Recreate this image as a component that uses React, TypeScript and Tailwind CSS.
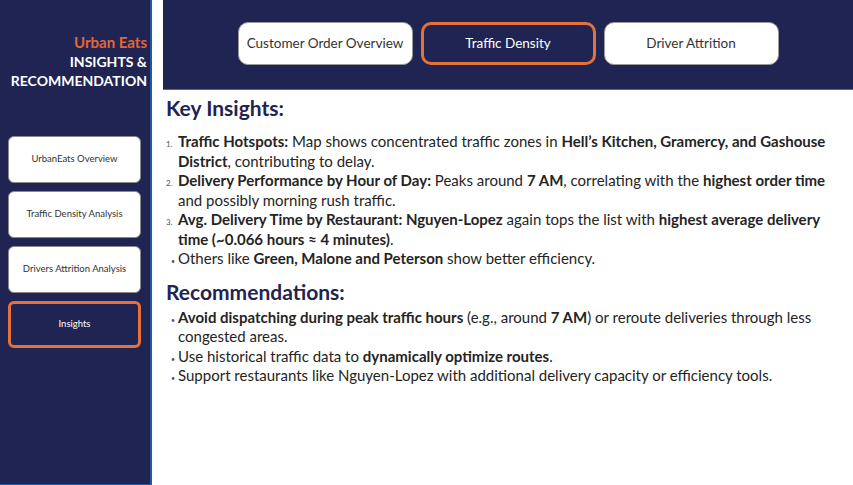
const navy = "bg-[#1f2452]";

const sideButtons = [
  { label: "UrbanEats Overview", active: false },
  { label: "Traffic Density Analysis", active: false },
  { label: "Drivers Attrition Analysis", active: false },
  { label: "Insights", active: true },
];

const topButtons = [
  { label: "Customer Order Overview", active: false },
  { label: "Traffic Density", active: true },
  { label: "Driver Attrition", active: false },
];

function Num({ n }: { n: string }) {
  return (
    <span className="inline-block w-[12px] text-[8px] leading-none text-[#555]">
      {n}
    </span>
  );
}

function Dot() {
  return (
    <span className="inline-block w-[12px] pl-[5px] text-[7px] leading-none text-[#555]">
      •
    </span>
  );
}

export default function App() {
  return (
    <div
      className="flex h-[485px] w-[853px] overflow-hidden bg-white"
      style={{ fontFamily: "Lato, 'Open Sans', sans-serif" }}
    >
      {/* sidebar */}
      <aside className={`${navy} flex w-[152px] shrink-0 flex-col border-r-2 border-b border-[#1b5aa6]`}>
        <div className="mt-[33px] pr-[3px] text-right text-[14px] font-bold leading-[19px]">
          <div className="text-[15px] text-[#e4663a]">Urban Eats</div>
          <div className="text-white">INSIGHTS &amp;</div>
          <div className="text-white">RECOMMENDATION</div>
        </div>
        <nav className="mt-[46px] ml-[8px] flex w-[133px] flex-col gap-[8px]">
          {sideButtons.map((b) =>
            b.active ? (
              <div
                key={b.label}
                className="flex h-[47px] items-center justify-center rounded-[6px] border-[3px] border-[#e4703a] text-[9.5px] text-white"
              >
                {b.label}
              </div>
            ) : (
              <div
                key={b.label}
                className="flex h-[47px] items-center justify-center rounded-[6px] border border-[#8a8a8a] bg-white text-[9.5px] text-[#333]"
              >
                {b.label}
              </div>
            )
          )}
        </nav>
      </aside>

      {/* main */}
      <main className="flex flex-1 flex-col">
        <header className={`${navy} ml-[11px] flex h-[90px] items-center justify-center gap-[8px] border-b border-[#3d6fb0] pb-[3px]`}>
          {topButtons.map((b) =>
            b.active ? (
              <div
                key={b.label}
                className="flex h-[43px] w-[175px] items-center justify-center rounded-[10px] border-[3px] border-[#e4703a] text-[13.5px] text-white"
              >
                {b.label}
              </div>
            ) : (
              <div
                key={b.label}
                className="flex h-[43px] w-[175px] items-center justify-center rounded-[10px] border border-[#9a9a9a] bg-white text-[13.5px] text-[#333]"
              >
                {b.label}
              </div>
            )
          )}
        </header>

        <section className="pl-[14px] text-[15px] leading-[19.5px] text-[#252423]">
          <h1 className="mt-[4px] text-[21px] font-bold leading-[28px] text-[#1f2452]">
            Key Insights:
          </h1>
          <div className="mt-[10px] whitespace-nowrap">
            <div>
              <Num n="1." />
              <b>Traffic Hotspots:</b> Map shows concentrated traffic zones in{" "}
              <b>Hell’s Kitchen, Gramercy, and Gashouse</b>
            </div>
            <div className="pl-[12px]">
              <b>District</b>, contributing to delay.
            </div>
            <div>
              <Num n="2." />
              <b>Delivery Performance by Hour of Day:</b> Peaks around <b>7 AM</b>,
              correlating with the <b>highest order time</b>
            </div>
            <div className="pl-[12px]">and possibly morning rush traffic.</div>
            <div>
              <Num n="3." />
              <b>Avg. Delivery Time by Restaurant: Nguyen-Lopez</b> again tops the list
              with <b>highest average delivery</b>
            </div>
            <div className="pl-[12px]">
              <b>time (~0.066 hours ≈ 4 minutes)</b>.
            </div>
            <div>
              <Dot />
              Others like <b>Green, Malone and Peterson</b> show better efficiency.
            </div>
          </div>

          <h2 className="mt-[9px] text-[21px] font-bold leading-[28px] text-[#1f2452]">
            Recommendations:
          </h2>
          <div className="mt-[2px] whitespace-nowrap">
            <div>
              <Dot />
              <b>Avoid dispatching during peak traffic hours</b> (e.g., around{" "}
              <b>7 AM</b>) or reroute deliveries through less
            </div>
            <div className="pl-[12px]">congested areas.</div>
            <div>
              <Dot />
              Use historical traffic data to <b>dynamically optimize routes</b>.
            </div>
            <div>
              <Dot />
              Support restaurants like Nguyen-Lopez with additional delivery capacity or
              efficiency tools.
            </div>
          </div>
        </section>
      </main>
    </div>
  );
}
